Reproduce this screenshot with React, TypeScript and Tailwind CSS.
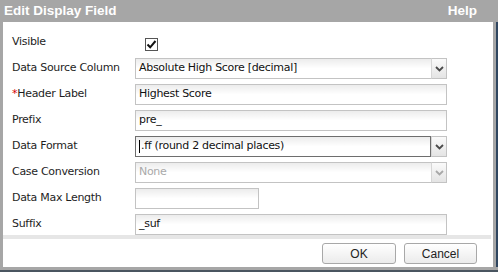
import React from "react";

const labelFont = { fontFamily: '"DejaVu Sans", Verdana, sans-serif', letterSpacing: "-0.3px" };

function Chevron({ disabled }: { disabled?: boolean }) {
  return (
    <svg width="9" height="6" viewBox="0 0 9 6">
      <path
        d="M1 1 L4.5 4.5 L8 1"
        fill="none"
        stroke={disabled ? "#a8a8a8" : "#4a4a4a"}
        strokeWidth="1.8"
      />
    </svg>
  );
}

function Row({ label, required, children }: { label: string; required?: boolean; children: React.ReactNode }) {
  return (
    <div className="flex h-[21px] items-center">
      <div className="w-[132px] shrink-0 pl-[9px] text-[11px] text-[#1e1e1e]" style={labelFont}>
        {required && <span className="text-[#d40000]">*</span>}
        {label}
      </div>
      {children}
    </div>
  );
}

function TextBox({ value, width = "w-[312px]" }: { value: string; width?: string }) {
  return (
    <div
      className={`${width} h-[21px] border border-[#c3c3c3] bg-gradient-to-b from-[#ececec] via-white to-white flex items-center pl-[3px] text-[11px] text-[#111]`}
      style={labelFont}
    >
      {value}
    </div>
  );
}

function Select({
  value,
  focused,
  disabled,
  caret,
}: {
  value: string;
  focused?: boolean;
  disabled?: boolean;
  caret?: boolean;
}) {
  return (
    <div className="w-[312px] h-[21px] flex">
      <div
        className={`flex-1 h-full border ${
          focused ? "border-[#6e6e6e]" : "border-[#c3c3c3] border-r-0"
        } bg-gradient-to-b from-[#ececec] via-white to-white flex items-center pl-[3px] text-[11px] ${
          disabled ? "text-[#a9a9a9]" : "text-[#111]"
        }`}
        style={labelFont}
      >
        {caret && <span className="inline-block w-px h-[13px] bg-black mr-[1px]" />}
        {value}
      </div>
      <div className="w-[16px] h-full border border-[#c3c3c3] border-l-[#d6d6d6] bg-gradient-to-b from-[#fafafa] to-[#e4e4e4] flex items-center justify-center">
        <Chevron disabled={disabled} />
      </div>
    </div>
  );
}

export default function App() {
  return (
    <div className="w-[498px] h-[272px] bg-[#a6a6a6] overflow-hidden flex flex-col">
      <div
        className="h-[22px] flex items-center justify-between pl-[4px] pr-[21px] text-white font-bold text-[13.5px]"
        style={{ fontFamily: '"Liberation Sans", Arial, sans-serif' }}
      >
        <span>Edit Display Field</span>
        <span>Help</span>
      </div>
      <div className="flex h-[245px]">
        <div className="w-[3px] shrink-0" />
        <div className="w-[490px] shrink-0 bg-white flex flex-col">
          <div className="flex flex-col gap-[5px] pt-[10px] h-[213px]">
            <Row label="Visible">
              <div className="w-[13px] h-[13px] ml-[10px] mt-[4px] border border-[#555] bg-white flex items-center justify-center">
                <svg width="11" height="11" viewBox="0 0 11 11">
                  <path d="M1.5 5.5 L4.2 8.3 L9.5 2" fill="none" stroke="#111" strokeWidth="2" />
                </svg>
              </div>
            </Row>
            <Row label="Data Source Column">
              <Select value="Absolute High Score [decimal]" />
            </Row>
            <Row label="Header Label" required>
              <TextBox value="Highest Score" />
            </Row>
            <Row label="Prefix">
              <TextBox value="pre_" />
            </Row>
            <Row label="Data Format">
              <Select value=".ff (round 2 decimal places)" focused caret />
            </Row>
            <Row label="Case Conversion">
              <Select value="None" disabled />
            </Row>
            <Row label="Data Max Length">
              <TextBox value="" width="w-[124px]" />
            </Row>
            <Row label="Suffix">
              <TextBox value="_suf" />
            </Row>
          </div>
          <div className="h-[4px] w-[488px] bg-[#e6e6e6]" />
          <div className="flex-1 flex justify-end items-start pt-[4px] pr-[16px] gap-[8px]">
            {["OK", "Cancel"].map((t, i) => (
              <button
                key={t}
                className={`${i === 0 ? "w-[74px]" : "w-[73px]"} h-[21px] rounded-[3px] border border-[#a8a8a8] bg-gradient-to-b from-white to-[#ebebeb] text-[12px] text-[#222]`}
                style={{ fontFamily: '"Liberation Sans", Arial, sans-serif' }}
              >
                {t}
              </button>
            ))}
          </div>
        </div>
        <div className="w-[3px] shrink-0" />
        <div className="w-[2px] shrink-0 bg-[#2f4660]" />
      </div>
      <div className="h-[3px]" />
      <div className="h-[2px] bg-[#4a5560]" />
    </div>
  );
}
